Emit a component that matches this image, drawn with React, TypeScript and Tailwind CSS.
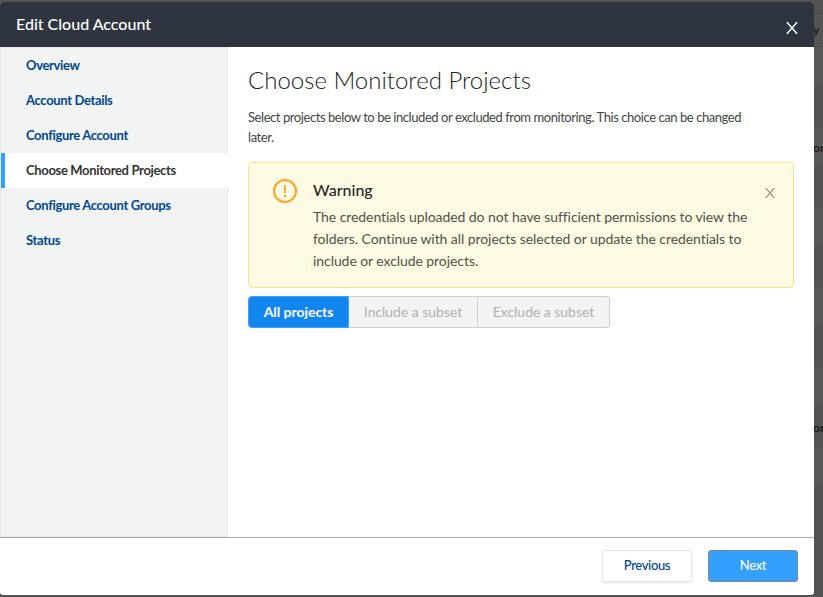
const steps = [
  "Overview",
  "Account Details",
  "Configure Account",
  "Choose Monitored Projects",
  "Configure Account Groups",
  "Status",
];

const tableRows = ["", "", "on", "", "", "", "", "", "", "on", ""];

function Cross({ size, width }: { size: number; width: number }) {
  return (
    <svg width={size} height={size} viewBox="0 0 12 12" fill="none" stroke="currentColor" strokeWidth={width}>
      <path d="M1.2 0.5 10.8 11.5M10.8 0.5 1.2 11.5" />
      <path d="M0.3 0.5h2M9.7 0.5h2M0.3 11.5h2M9.7 11.5h2" strokeWidth={width * 0.6} />
    </svg>
  );
}

function DimmedPage() {
  return (
    <div className="flex h-full flex-col bg-[#505352] pl-[814px] text-[12px] font-bold text-[#1c1c1c]">
      <div className="h-[14px] shrink-0 border-b border-[#4a4c4b] bg-[#525252]" />
      <div className="flex h-[33px] shrink-0 items-center border-b border-[#4a4c4b] bg-[#525352]">
        <span className="-ml-px">y</span>
      </div>
      {tableRows.map((text, i) => (
        <div
          key={i}
          className="flex h-10 shrink-0 items-center overflow-hidden pt-[2px] odd:bg-[#575757] even:bg-[#505352]"
        >
          <span className="-ml-px">{text}</span>
        </div>
      ))}
    </div>
  );
}

export default function App() {
  return (
    <div className="relative h-[597px] w-[823px] overflow-hidden bg-[#4c4c4c] font-['Lato',sans-serif]">
      <DimmedPage />
      <div
        role="dialog"
        className="absolute top-[2px] left-0 flex h-[593px] w-[814px] flex-col overflow-hidden rounded-[3px] bg-white"
      >
        <header className="flex h-[45px] shrink-0 items-center justify-between bg-[#2f3540] pr-4 pl-4 text-white">
          <h1 className="pb-[2px] text-[16px] leading-5 font-medium">Edit Cloud Account</h1>
          <button className="mt-[7px]" aria-label="Close">
            <Cross size={12} width={1.3} />
          </button>
        </header>

        <div className="flex h-[490px] shrink-0">
          <nav className="w-[228px] shrink-0 border border-[#e4e7e7] bg-[#f1f4f3] text-[13px] font-bold tracking-[-0.34px]">
            {steps.map((step) =>
              step === "Choose Monitored Projects" ? (
                <div
                  key={step}
                  className="-mr-px flex h-[35px] items-center border-l-4 border-[#33a0ff] bg-white pl-[21px] text-[#333333]"
                >
                  {step}
                </div>
              ) : (
                <div key={step} className="flex h-[35px] items-center pl-[25px] text-[#00468e]">
                  {step}
                </div>
              ),
            )}
          </nav>

          <main className="flex-1 pt-[17px] pr-5 pl-5">
            <h2 className="text-[24px] leading-8 font-light text-[#222222]">Choose Monitored Projects</h2>
            <p className="mt-[11px] w-[510px] text-[13px] leading-5 tracking-[-0.435px] text-[#444444]">
              Select projects below to be included or excluded from monitoring. This choice can be changed later.
            </p>

            <section className="mt-[15px] flex h-[126px] rounded-[4px] border border-[#ffe08a] bg-[#fffae3] pt-4 pr-[18px] pl-6">
              <svg className="shrink-0" width="24" height="24" viewBox="0 0 24 24" fill="none" stroke="#ffa229">
                <circle cx="12" cy="12" r="11" strokeWidth="2" />
                <path d="M12 6v8" strokeWidth="1.8" />
                <circle cx="12" cy="17" r="1.2" fill="#ffa229" stroke="none" />
              </svg>
              <div className="-mt-px ml-4 w-[440px]">
                <h3 className="text-[16px] leading-6 font-medium text-[#262626]">Warning</h3>
                <p className="mt-1 text-[14px] leading-[22px] tracking-[-0.07px] text-[#53514a]">
                  The credentials uploaded do not have sufficient permissions to view the folders. Continue with all
                  projects selected or update the credentials to include or exclude projects.
                </p>
              </div>
              <button className="mt-[9px] ml-auto self-start text-[#8b897e]" aria-label="Dismiss">
                <Cross size={10} width={1.3} />
              </button>
            </section>

            <div className="mt-2 flex h-8 text-[14px] tracking-[-0.04px]">
              <button className="w-[101px] rounded-l-[4px] border border-[#3da2fb] bg-[#1385ee] pb-[2px] font-bold text-white">
                All projects
              </button>
              <button className="w-[129px] border-y border-r border-[#d0d0d0] bg-[#f3f3f3] pb-[2px] text-[#b0b0b0]">
                Include a subset
              </button>
              <button className="w-[132px] rounded-r-[4px] border-y border-r border-[#d0d0d0] bg-[#f3f3f3] pb-[2px] text-[#b0b0b0]">
                Exclude a subset
              </button>
            </div>
          </main>
        </div>

        <footer className="flex flex-1 justify-end gap-4 border-t border-[#a9a9a9] pt-3 pr-4 text-[13px] font-medium tracking-[-0.36px]">
          <button className="h-8 w-[90px] rounded-[3px] border border-[#e4e6e8] bg-white text-[#00468e] shadow-[0_1px_2px_rgba(0,0,0,0.12)]">
            Previous
          </button>
          <button className="h-8 w-[90px] rounded-[3px] border border-[#7d8790] bg-[#33a0ff] text-white">Next</button>
        </footer>
      </div>
    </div>
  );
}
